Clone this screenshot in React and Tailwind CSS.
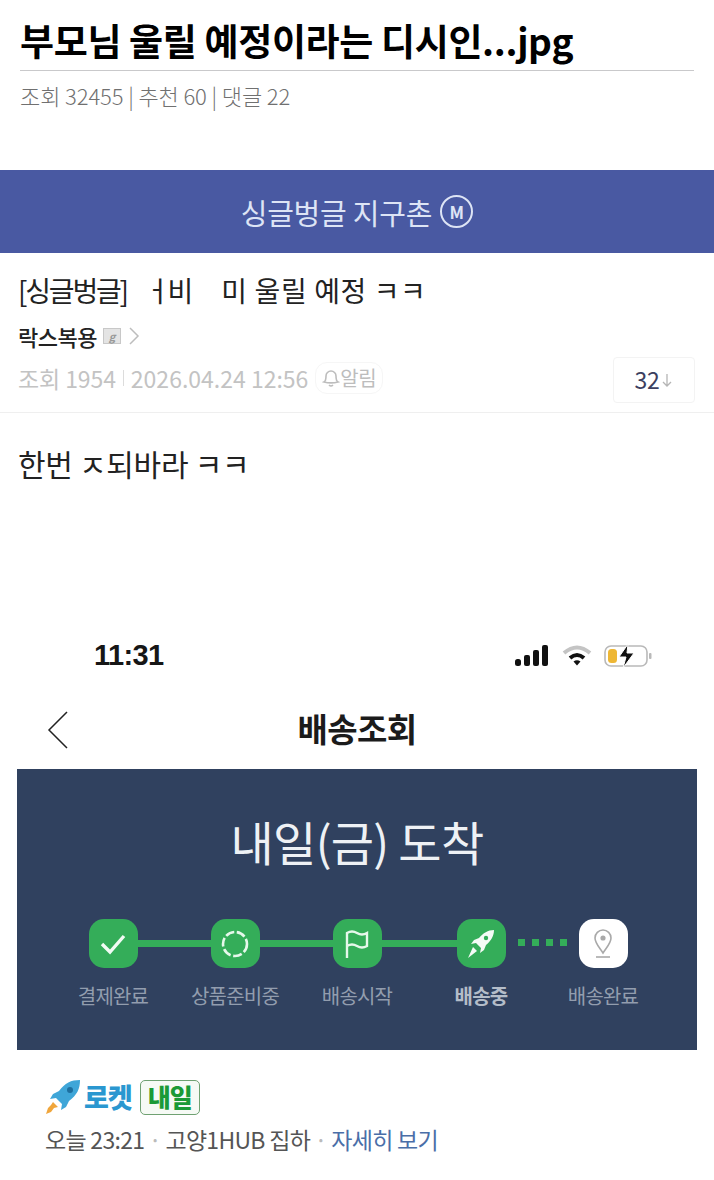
function Step({ label, bold, white, className, children }) {
  return (
    <div className={`w-[122px] flex flex-col items-center shrink-0 ${className || ''}`}>
      <div className={`w-[49px] h-[49px] rounded-[15px] flex items-center justify-center ${white ? 'bg-white' : 'bg-[#34ad59]'}`}>
        {children}
      </div>
      <div className={`mt-[15px] text-[20px] leading-[26px] tracking-[-0.8px] whitespace-nowrap ${bold ? 'font-bold text-[#b4bdc9]' : 'text-[#929dae]'}`}>{label}</div>
    </div>
  )
}

export default function App() {
  return (
    <div className="w-[714px] h-[1180px] bg-white overflow-hidden text-black [font-family:'Noto_Sans_CJK_KR',sans-serif]">
      <div className="mx-[20px] h-[71px] border-b border-[#c9c9cb] flex items-end pb-[1px]">
        <h1 className="text-[37px] leading-[58px] font-bold tracking-[-0.35px] whitespace-nowrap">부모님 울릴 예정이라는 디시인...jpg</h1>
      </div>
      <div className="mx-[20px] mt-[9px] text-[22px] leading-[30px] text-[#707070] tracking-[-0.1px] font-light">조회 32455 | 추천 60 | 댓글 22</div>

      <div className="mt-[60px] h-[83px] bg-[#4959a2] flex items-center justify-center gap-[8px] text-[#dde4f5]">
        <span className="text-[29px] tracking-[-0.2px] leading-[40px]">싱글벙글 지구촌</span>
        <span className="w-[33px] h-[33px] rounded-full border-2 border-[#dde4f5] flex items-center justify-center text-[17px] font-bold leading-none">M</span>
      </div>

      <div className="h-[160px] border-b border-[#efefef] px-[18px]">
        <div className="pt-[17px] text-[28px] leading-[40px] tracking-[0.6px] text-[#222] whitespace-nowrap">
          <span className="tracking-[-2.2px]">[싱글벙글]</span><span className="inline-block w-[18px]" /><span className="tracking-[-3px]">ㅓ비</span><span className="inline-block w-[31px]" />미 울릴 예정 ㅋㅋ
        </div>
        <div className="mt-[11px] h-[30px] flex items-center">
          <span className="text-[22px] font-medium tracking-[-0.5px] text-[#222]">락스복용</span>
          <span className="ml-[6px] w-[18px] h-[16px] bg-[#e4e4e4] border border-[#c8c8c8] flex items-center justify-center text-[11px] italic font-bold text-[#999] leading-none">g</span>
          <svg className="ml-[7px]" width="12" height="20" viewBox="0 0 12 20" fill="none" stroke="#bdbdbd" strokeWidth="1.5"><path d="M2 2l8 8-8 8" /></svg>
        </div>
        <div className="mt-[4px] flex items-center h-[46px]">
          <span className="text-[23px] text-[#c3c3c3] tracking-[-0.1px] whitespace-nowrap">조회 1954</span>
          <span className="mx-[7px] w-px h-[16px] bg-[#dcdcdc]" />
          <span className="text-[23px] text-[#c3c3c3] tracking-[0px] whitespace-nowrap">2026.04.24 12:56</span>
          <span className="ml-[7px] h-[32px] px-[6px] rounded-[12px] border border-[#f6f6f6] flex items-center text-[20px] text-[#bdbdbd] tracking-[-0.6px]">
            <svg width="18" height="20" viewBox="0 0 18 20" fill="none" stroke="#bdbdbd" strokeWidth="1.6"><path d="M2 14c2-1 2-3 2-6a5 5 0 0 1 10 0c0 3 0 5 2 6-4 1-10 1-14 0z" /><path d="M7 17q2 2 4 0" /></svg>
            알림
          </span>
          <span className="ml-auto mr-[1px] mt-[3px] w-[82px] h-[46px] rounded-[4px] border border-[#f3f3f3] flex items-center justify-center gap-[2px]">
            <span className="text-[23px] text-[#3c3f60] tracking-[-0.3px]">32</span>
            <svg width="12" height="16" viewBox="0 0 12 16" fill="none" stroke="#b5b5b5" strokeWidth="1.3"><path d="M6 2v12M2 10l4 4 4-4" /></svg>
          </span>
        </div>
      </div>

      <div className="px-[18px] pt-[29px] text-[30px] leading-[42px] tracking-[-0.3px] text-[#222] whitespace-nowrap">한번 ㅈ되바라 ㅋㅋ</div>

      <div className="mt-[148px] h-[48px] pl-[94px] pr-[62px] flex items-center justify-between">
        <span className="text-[29px] font-bold tracking-[-0.6px] text-[#161616] [font-family:'Liberation_Sans',sans-serif]">11:31</span>
        <div className="flex items-center gap-[12px]">
          <svg width="36" height="24" viewBox="0 0 36 24" fill="#111"><rect x="1" y="15" width="6" height="7" rx="2.5" /><rect x="10" y="11" width="6" height="11" rx="2" /><rect x="19" y="6" width="6" height="16" rx="2" /><rect x="28" y="1" width="6" height="21" rx="2" /></svg>
          <svg width="30" height="22" viewBox="0 0 30 22" fill="none"><path d="M2 8q13-11 26 0" stroke="#c4c4c4" strokeWidth="4" /><path d="M8 13q7-6 14 0" stroke="#111" strokeWidth="4" /><path d="M11.5 16.5l3.5 4 3.5-4q-3.5-2.5-7 0z" fill="#111" /></svg>
          <svg width="48" height="24" viewBox="0 0 48 24" fill="none"><rect x="1" y="2" width="42" height="20" rx="6" stroke="#b9b9b9" strokeWidth="1.6" /><rect x="4" y="5" width="9" height="14" rx="3.5" fill="#eeb735" /><path d="M24 0l-9 13h7l-3 11 11-15h-7z" fill="#111" stroke="#fff" strokeWidth="1" /><rect x="45" y="9" width="2.5" height="6" rx="1" fill="#b9b9b9" /></svg>
        </div>
      </div>

      <div className="relative mt-[29px] h-[40px] flex items-center justify-center">
        <svg className="absolute left-[46px] top-[1px]" width="24" height="40" viewBox="0 0 24 40" fill="none" stroke="#222" strokeWidth="1.5"><path d="M21 2L3 20l18 18" /></svg>
        <span className="text-[33px] font-bold tracking-[-0.6px] text-[#1b1b1b]">배송조회</span>
      </div>

      <div className="mx-[17px] mt-[20px] h-[281px] bg-[#30415f] flex flex-col items-center">
        <div className="mt-[39px] text-[47px] leading-[66px] tracking-[-0.7px] text-[#eef1f5]">내일(금) 도착</div>
        <div className="relative mt-[45px] flex justify-center w-[610px]">
          <div className="absolute left-[86px] top-[21px] w-[330px] h-[7px] bg-[#34ad59]" />
          <div className="absolute left-[466px] top-[20px] flex gap-[7px]">
            <i className="w-[7px] h-[7px] bg-[#34ad59]" /><i className="w-[7px] h-[7px] bg-[#34ad59]" /><i className="w-[7px] h-[7px] bg-[#34ad59]" /><i className="w-[7px] h-[7px] bg-[#34ad59]" />
          </div>
          <div className="relative flex ml-[2px]">
            <Step label="결제완료">
              <svg width="26" height="22" viewBox="0 0 26 22" fill="none" stroke="#f1fbf4" strokeWidth="3.4"><path d="M2 11l8 8L24 3" /></svg>
            </Step>
            <Step label="상품준비중">
              <svg width="30" height="30" viewBox="0 0 30 30" fill="none" stroke="#e6f8eb" strokeWidth="2.6"><circle cx="15" cy="15" r="12" strokeDasharray="9 2.6" /></svg>
            </Step>
            <Step label="배송시작">
              <svg width="26" height="30" viewBox="0 0 26 30" fill="none" stroke="#e6f8eb" strokeWidth="2.4"><path d="M3 29V4q5-3 10 0t10 0v13q-5 3-10 0t-10 0" /></svg>
            </Step>
            <Step label="배송중" bold className="ml-[2px]">
              <svg width="30" height="30" viewBox="0 0 30 30" fill="#f4fbf6"><path d="M28 1c-6 0-11 3-15 8l-5 2-3 4 5-1 5 5-1 5 4-3 2-5c5-4 8-9 8-15z" /><path d="M7 18l4 4-9 7z" /><circle cx="20" cy="9" r="2.2" fill="#34ad59" /></svg>
            </Step>
            <Step label="배송완료" white>
              <svg width="24" height="30" viewBox="0 0 24 30" fill="none" stroke="#a9a9a9" strokeWidth="1.6"><path d="M12 24C8 18 4 14 4 9a8 8 0 0 1 16 0c0 5-4 9-8 15z" /><circle cx="12" cy="9" r="1.8" fill="#a9a9a9" /><path d="M5 28h14" /></svg>
            </Step>
          </div>
        </div>
      </div>

      <div className="ml-[44px] mt-[27px] h-[40px] flex items-center">
        <svg width="38" height="36" viewBox="0 0 38 36" fill="none">
          <path d="M36 1c-9 0-15 3-21 11l-6 3-3 5 6-1 6 6-1 6 5-3 3-6c8-6 11-12 11-21z" fill="#3fa6d8" />
          <path d="M9 23l5 5-4 1-3 4-5 2 2-6 3-3z" fill="#f0a63c" />
          <circle cx="26" cy="11" r="3" fill="#1d6f9f" />
        </svg>
        <span className="ml-[2px] text-[27px] font-black tracking-[-1px] text-[#2a97d0]">로켓</span>
        <span className="ml-[8px] w-[60px] h-[35px] rounded-[5px] border border-[#6fa172] bg-[#f6faf5] flex items-center justify-center text-[25px] font-black tracking-[-1px] text-[#1b9a36]">내일</span>
      </div>

      <div className="ml-[45px] mt-[5px] text-[23px] leading-[34px] tracking-[-0.7px] text-[#555] whitespace-nowrap">
        오늘 23:21 <span className="text-[#bbb]">·</span> 고양1HUB 집하 <span className="text-[#bbb]">·</span> <span className="text-[#4a6ea8]">자세히 보기</span>
      </div>
    </div>
  )
}
